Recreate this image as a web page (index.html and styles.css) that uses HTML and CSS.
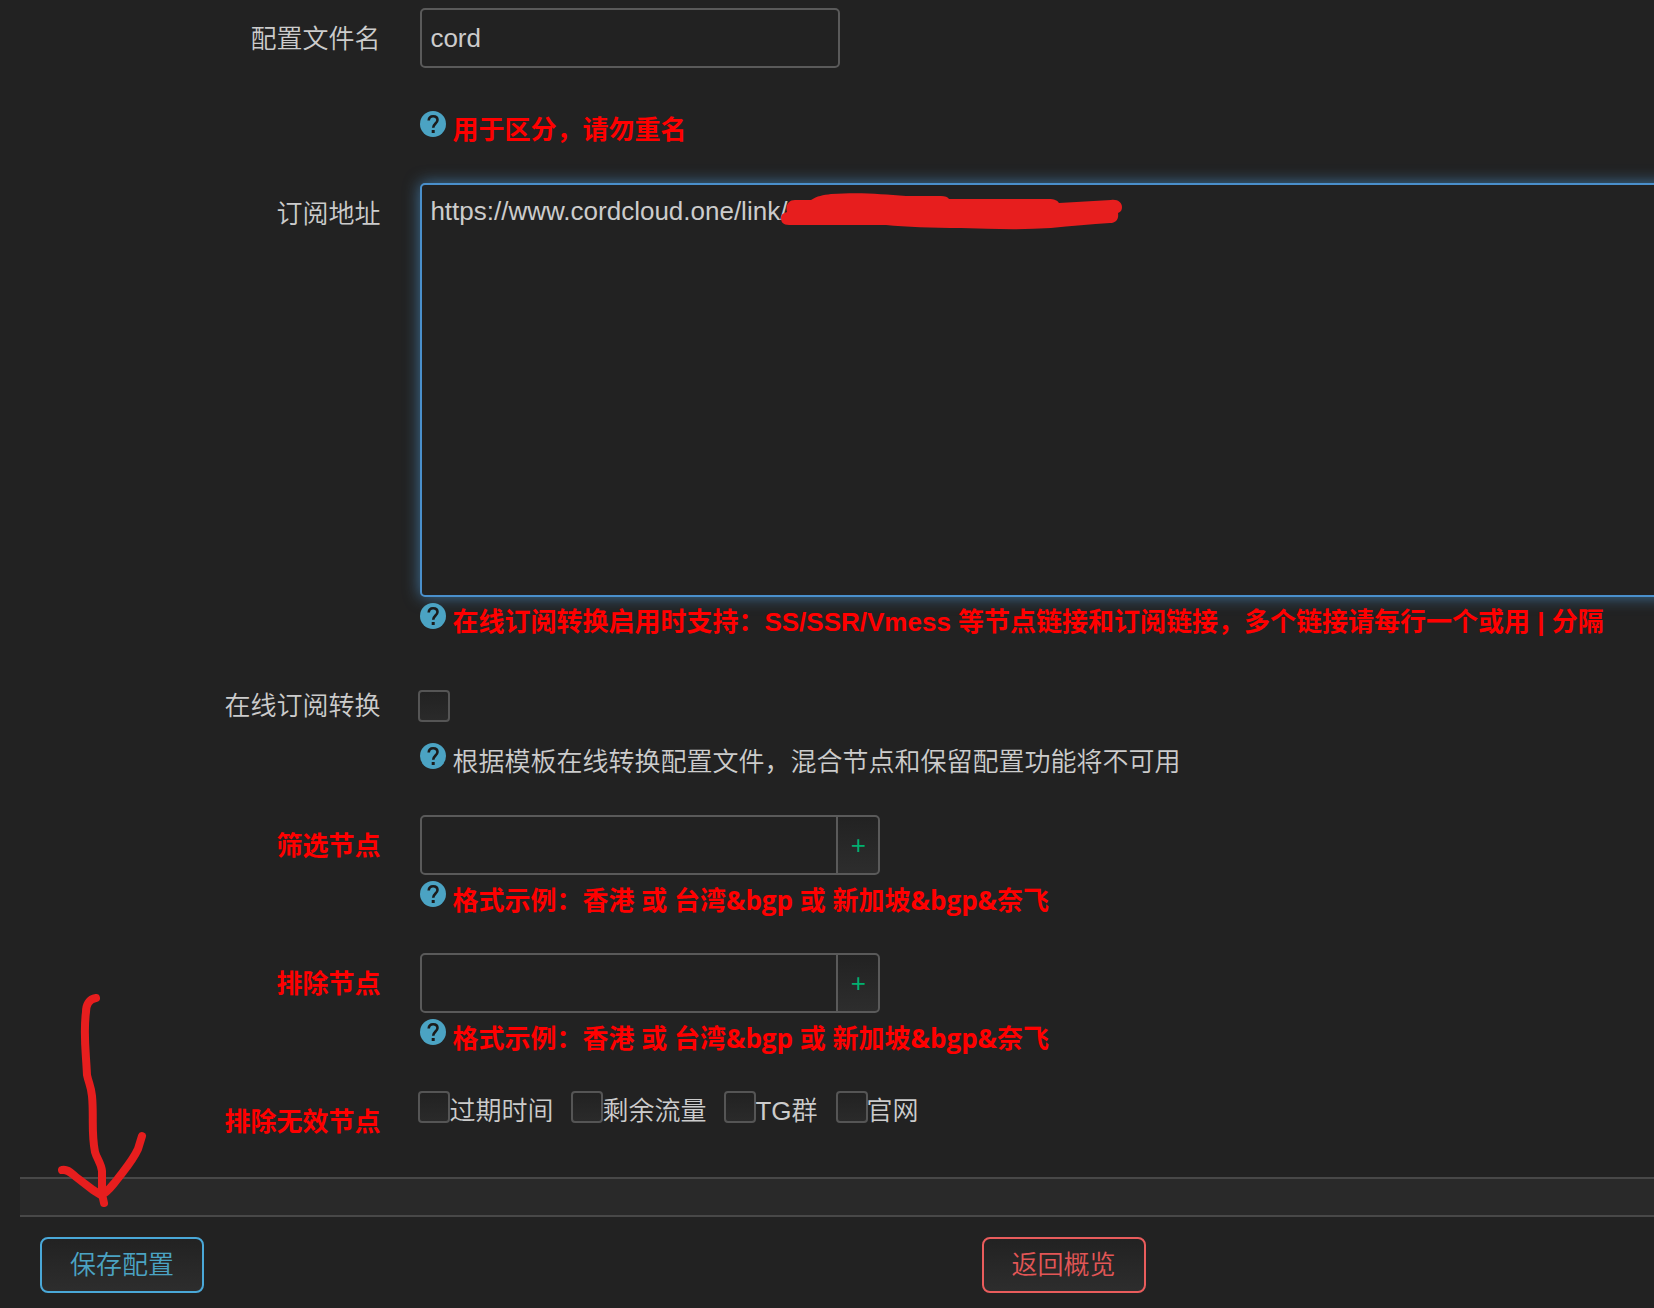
FILE: index.html
```
<!DOCTYPE html>
<html lang="zh-CN">
<head>
<meta charset="utf-8" />
<title>配置文件订阅</title>
<link rel="stylesheet" href="styles.css">
</head>

<body>
<svg class="defs" width="0" height="0" aria-hidden="true">
	<symbol id="help" viewBox="0 0 26 26">
		<circle cx="13" cy="13" r="13" fill="#4ba3c3" />
		<path d="M8.700 9.500c.2-2.900 2-4.300 4.400-4.300 2.600 0 4.400 1.500 4.400 3.800 0 3.300-4.300 3.800-4.300 7.800" fill="none" stroke="#1b1b1b" stroke-width="2.600" />
		<rect x="11.700" y="19" width="3" height="3" fill="#1b1b1b" />
	</symbol>
</svg>
<form class="cbi">
<div class="row">
	<label class="title" for="name">配置文件名</label>
	<div class="field">
		<input class="text" id="name" type="text" value="cord" />
		<div class="help red far"><svg class="icon"><use href="#help" /></svg>用于区分，请勿重名</div>
	</div>
</div>
<div class="row">
	<label class="title" for="address">订阅地址</label>
	<div class="field">
		<div class="area">
			<textarea id="address" spellcheck="false">https://www.cordcloud.one/link/</textarea>
			<svg class="scribble" viewBox="0 0 342 38" aria-hidden="true">
				<path d="M8 32C2 32 0 29 0 25C0 21 3 20 6 19C4 12 8 7 14 7H30C36 3 42 2 50 1C80-1 100 1 125 3H160C164 3 167 4 168 6H268C273 6 276 7 278 10L330 7C337 6 341 10 341 14C341 17 340 19 337 20C338 26 335 30 329 30C310 31 290 33 270 35C240 37 210 36 180 35C150 35 125 34 105 32Z" fill="#e71e1e" />
			</svg>
		</div>
		<div class="help red"><svg class="icon"><use href="#help" /></svg>在线订阅转换启用时支持：SS/SSR/Vmess 等节点链接和订阅链接，多个链接请每行一个或用 | 分隔</div>
	</div>
</div>
<div class="row">
	<label class="title" for="convert">在线订阅转换</label>
	<div class="field">
		<div class="line"><input class="check" id="convert" type="checkbox" /></div>
		<div class="help"><svg class="icon"><use href="#help" /></svg>根据模板在线转换配置文件，混合节点和保留配置功能将不可用</div>
	</div>
</div>
<div class="row">
	<label class="title red" for="keep">筛选节点</label>
	<div class="field">
		<div class="group"><input class="text" id="keep" type="text" /><button class="add" type="button">+</button></div>
		<div class="help red example"><svg class="icon"><use href="#help" /></svg>格式示例：香港 或 台湾&amp;bgp 或 新加坡&amp;bgp&amp;奈飞</div>
	</div>
</div>
<div class="row">
	<label class="title red" for="drop">排除节点</label>
	<div class="field">
		<div class="group"><input class="text" id="drop" type="text" /><button class="add" type="button">+</button></div>
		<div class="help red example"><svg class="icon"><use href="#help" /></svg>格式示例：香港 或 台湾&amp;bgp 或 新加坡&amp;bgp&amp;奈飞</div>
	</div>
</div>
<div class="row">
	<span class="title red" id="invalid">排除无效节点</span>
	<div class="field checks" role="group" aria-labelledby="invalid">
		<label><input class="check" type="checkbox" /><span>过期时间</span></label>
		<label><input class="check" type="checkbox" /><span>剩余流量</span></label>
		<label><input class="check" type="checkbox" /><span>TG群</span></label>
		<label><input class="check" type="checkbox" /><span>官网</span></label>
	</div>
</div>
<div class="band"></div>
<div class="actions">
	<div><button class="btn save" type="button">保存配置</button></div>
	<div><button class="btn back" type="button">返回概览</button></div>
	<svg class="arrow" viewBox="0 0 90 216" aria-hidden="true">
		<path d="M38 6C31 7 28 13 28 20C25 42 28 60 29 83C31 92 33 94 34 104C36 125 33 140 37 160C39 167 43 171 44 179V202L46 211M4 178C10 177 13 181 18 185L35 198L43 203C49 201 53 195 58 189C66 178 74 170 80 157L84 144" fill="none" stroke="#e71e1e" stroke-width="8" stroke-linecap="round" stroke-linejoin="round" />
	</svg>
</div>
</form>
</body>
</html>
```

FILE: styles.css
```
*{
	box-sizing:border-box
	}
body{
	margin:0;
	background:#222;
	color:#ccc;
	font:350 26px/30px "Liberation Sans", "Noto Sans CJK SC", sans-serif;
	overflow-x:hidden
	}
input, textarea, button{
	margin:0;
	font:inherit;
	color:inherit
	}
.defs{
	position:absolute
	}
.cbi{
	padding-top:8px
	}
.row{
	display:flex;
	gap:40px;
	margin-bottom:34px
	}
.title{
	flex:0 0 23%;
	line-height:62px;
	text-align:right
	}
.field{
	flex:1;
	min-width:0
	}
.red{
	color:#f00;
	font-weight:bold
	}
.text{
	display:block;
	width:420px;
	height:60px;
	padding:0 8px;
	background:#222;
	border:2px solid #5a5a5a;
	border-radius:5px
	}
.area{
	position:relative;
	margin-right:-20px
	}
textarea{
	display:block;
	width:100%;
	height:414px;
	padding:11px 8px;
	background:#222;
	border:2px solid #4a90cc;
	border-radius:5px;
	box-shadow:0 0 16px rgba(82,168,236,.6);
	outline:none;
	resize:none
	}
/* 遮住订阅地址 */
.scribble{
	position:absolute;
	left:361px;
	top:10px;
	width:342px;
	height:38px
	}
.help{
	position:relative;
	display:flex;
	gap:6px;
	margin-top:6px;
	line-height:38px;
	white-space:nowrap
	}
.far{
	margin-top:43px
	}
.example{
	font-family:"Open Sans", "Noto Sans CJK SC", sans-serif
	}
.icon{
	flex:none;
	width:26px;
	height:26px
	}
.line{
	display:flex;
	align-items:center;
	height:62px;
	margin-left:-2px
	}
.check{
	appearance:none;
	flex:none;
	width:32px;
	height:32px;
	background:linear-gradient(#222, #2a2a2a);
	border:2px solid #555;
	border-radius:4px
	}
.check:checked{
	background:#4ba3c3
	}
.group{
	display:flex
	}
.group .text{
	width:418px;
	border-radius:5px 0 0 5px
	}
.add{
	width:44px;
	margin-left:-2px;
	padding:0;
	color:#00b070;
	background:linear-gradient(#222, #2d2d2d);
	border:2px solid #5a5a5a;
	border-radius:0 5px 5px 0
	}
.checks{
	display:flex;
	gap:18px;
	margin-left:-2px
	}
.checks label{
	display:flex;
	line-height:40px
	}
.checks span{
	margin-left:-1px
	}
.band{
	height:40px;
	margin:-10px 0 0 20px;
	background:#292929;
	border-top:2px solid #484848;
	border-bottom:2px solid #484848
	}
.actions{
	position:relative;
	display:grid;
	grid-template-columns:7fr 5fr;
	padding:20px 0 16px 40px
	}
.btn{
	height:56px;
	padding:0 28px;
	background:linear-gradient(#222, #2d2d2d);
	border:2px solid;
	border-radius:8px
	}
.save{
	color:#4ba3c3;
	border-color:#4aa8d8
	}
.back{
	color:#e25656;
	border-color:#e95c5c
	}
/* 指向保存按钮的箭头 */
.arrow{
	position:absolute;
	left:58px;
	bottom:101px;
	width:90px;
	height:216px;
	pointer-events:none
	}
```
